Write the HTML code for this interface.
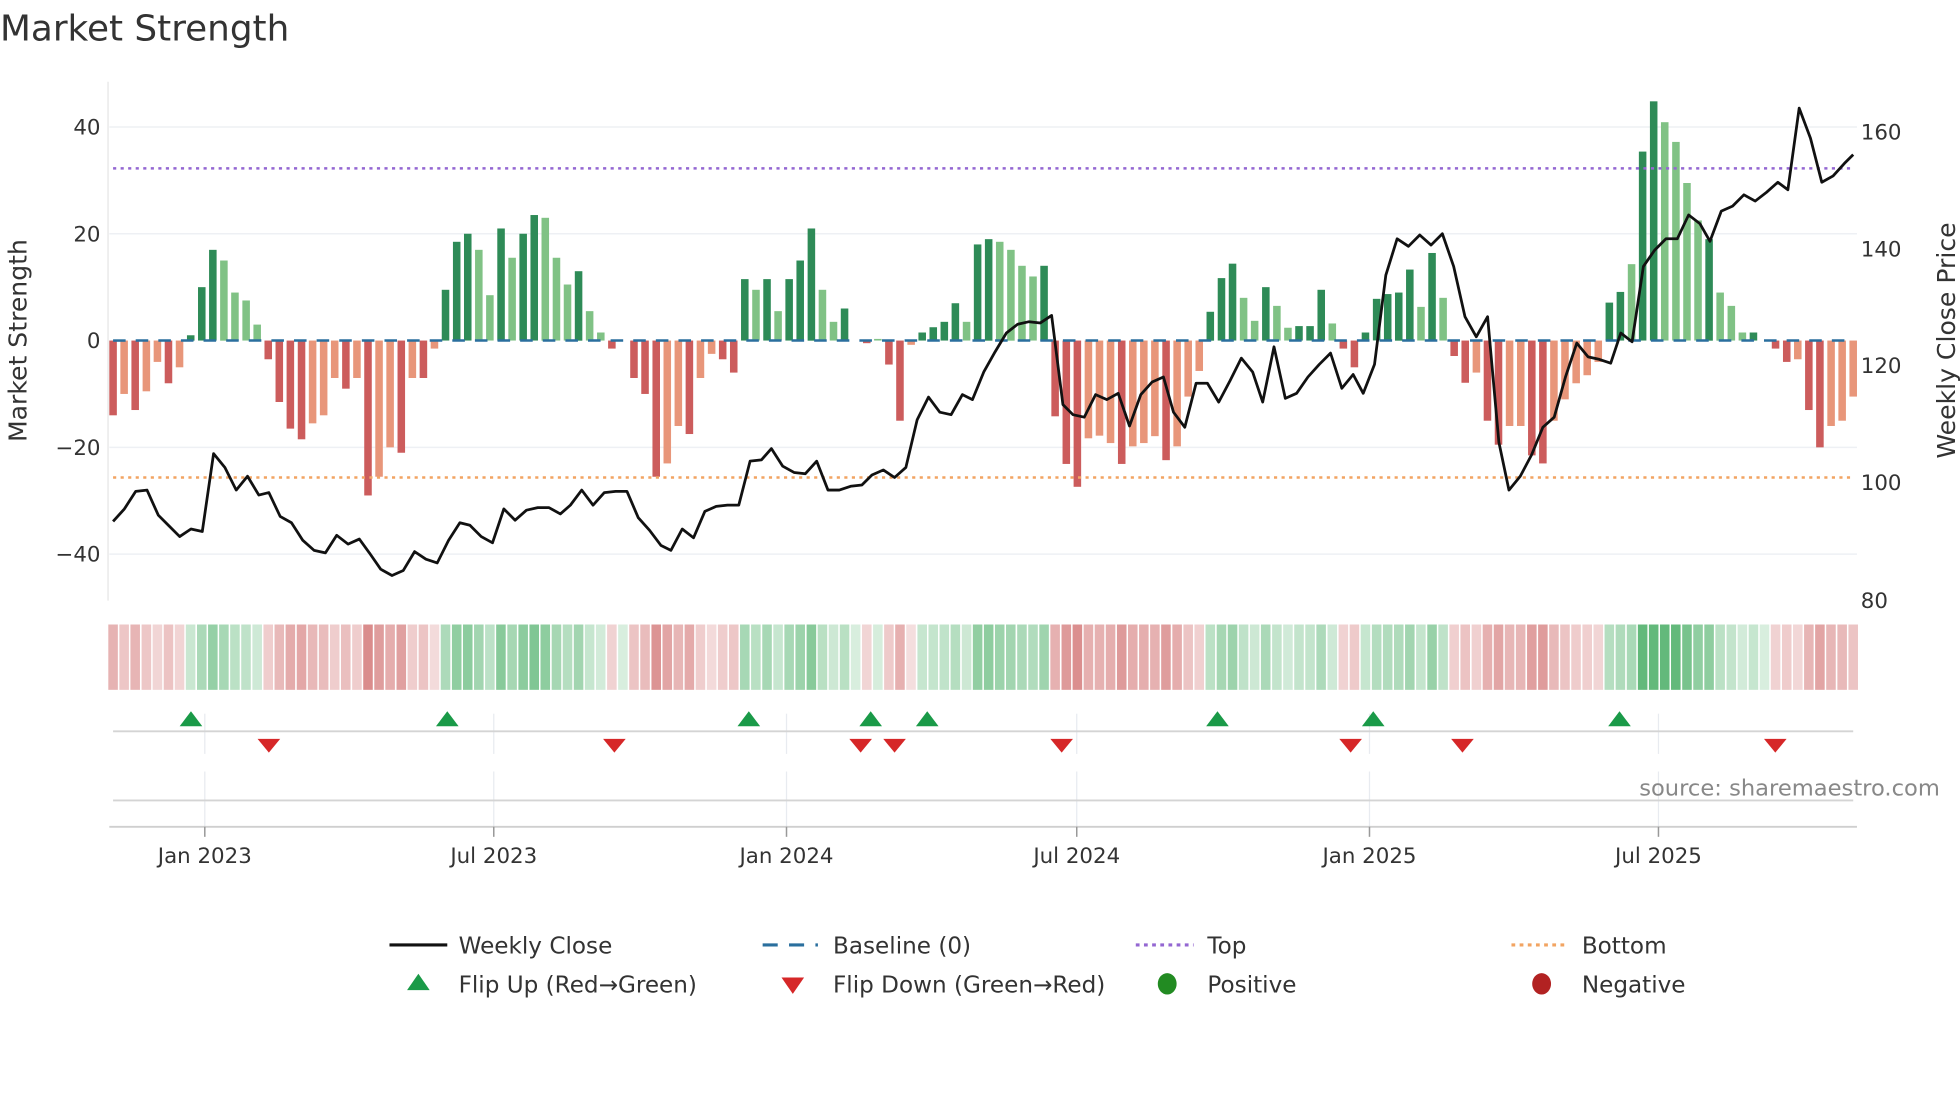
<!DOCTYPE html>
<html><head><meta charset="utf-8"><style>
html,body{margin:0;padding:0;background:#fff;width:1960px;height:1102px;overflow:hidden}
svg{display:block;font-family:"DejaVu Sans","Liberation Sans",sans-serif}
</style></head><body>
<svg id="s" width="1960" height="1102" viewBox="0 0 1560 877" xmlns="http://www.w3.org/2000/svg">
<text x="0" y="32" font-size="28.5" fill="#333">Market Strength</text>
<g stroke="#eef0f4" stroke-width="1.2">
<line x1="87" y1="101" x2="1478" y2="101"/><line x1="87" y1="186" x2="1478" y2="186"/>
<line x1="87" y1="356" x2="1478" y2="356"/><line x1="87" y1="441" x2="1478" y2="441"/>
</g>
<line x1="86" y1="65" x2="86" y2="478" stroke="#e6e6e6"/>
<g id="bars"></g>
<line x1="90" y1="271" x2="1476" y2="271" stroke="#2a6f9e" stroke-width="2" stroke-dasharray="10,8"/>
<line x1="90" y1="134" x2="1476" y2="134" stroke="#9467d2" stroke-width="2" stroke-dasharray="2.5,3.5"/>
<line x1="90" y1="380" x2="1476" y2="380" stroke="#f2a462" stroke-width="2" stroke-dasharray="2.5,3.5"/>
<polyline id="price" fill="none" stroke="#111" stroke-width="2.2" stroke-linejoin="round"/>
<g font-size="17" fill="#333" text-anchor="end">
<text x="80" y="107">40</text><text x="80" y="192">20</text><text x="80" y="277">0</text>
<text x="80" y="362">−20</text><text x="80" y="447">−40</text>
</g>
<g font-size="17" fill="#333">
<text x="1481" y="111">160</text><text x="1481" y="204">140</text><text x="1481" y="297">120</text>
<text x="1481" y="390">100</text><text x="1481" y="484">80</text>
</g>
<text transform="translate(21,271) rotate(-90)" text-anchor="middle" font-size="20" fill="#333">Market Strength</text>
<text transform="translate(1556,271) rotate(-90)" text-anchor="middle" font-size="20" fill="#333">Weekly Close Price</text>
<g id="strip"></g>
<g stroke="#e8ebf0" stroke-width="1">
<line x1="163" y1="568" x2="163" y2="600"/><line x1="163" y1="614" x2="163" y2="658"/>
<line x1="393" y1="568" x2="393" y2="600"/><line x1="393" y1="614" x2="393" y2="658"/>
<line x1="626" y1="568" x2="626" y2="600"/><line x1="626" y1="614" x2="626" y2="658"/>
<line x1="857" y1="568" x2="857" y2="600"/><line x1="857" y1="614" x2="857" y2="658"/>
<line x1="1090" y1="568" x2="1090" y2="600"/><line x1="1090" y1="614" x2="1090" y2="658"/>
<line x1="1320" y1="568" x2="1320" y2="600"/><line x1="1320" y1="614" x2="1320" y2="658"/>
</g>
<line x1="90" y1="582" x2="1475" y2="582" stroke="#d4d4d4" stroke-width="1.5"/>
<line x1="90" y1="637" x2="1475" y2="637" stroke="#d4d4d4" stroke-width="1.5"/>
<line x1="87" y1="658" x2="1478" y2="658" stroke="#cfcfcf" stroke-width="1.5"/>
<g stroke="#999" stroke-width="1.2">
<line x1="163" y1="658" x2="163" y2="666"/><line x1="393" y1="658" x2="393" y2="666"/><line x1="626" y1="658" x2="626" y2="666"/>
<line x1="857" y1="658" x2="857" y2="666"/><line x1="1090" y1="658" x2="1090" y2="666"/><line x1="1320" y1="658" x2="1320" y2="666"/>
</g>
<g id="flips"></g>
<text x="1544" y="633" text-anchor="end" font-size="18" fill="#888">source: sharemaestro.com</text>
<g font-size="17" fill="#333" text-anchor="middle">
<text x="163" y="687">Jan 2023</text><text x="393" y="687">Jul 2023</text><text x="626" y="687">Jan 2024</text>
<text x="857" y="687">Jul 2024</text><text x="1090" y="687">Jan 2025</text><text x="1320" y="687">Jul 2025</text>
</g>
<g font-size="18.4" fill="#333">
<line x1="310" y1="752" x2="356" y2="752" stroke="#111" stroke-width="2.5"/>
<text x="365" y="759">Weekly Close</text>
<line x1="607" y1="752" x2="651" y2="752" stroke="#2a6f9e" stroke-width="2.5" stroke-dasharray="12,9"/>
<text x="663" y="759">Baseline (0)</text>
<line x1="904" y1="752" x2="950" y2="752" stroke="#9467d2" stroke-width="2.5" stroke-dasharray="3,3.5"/>
<text x="961" y="759">Top</text>
<line x1="1203" y1="752" x2="1247" y2="752" stroke="#f2a462" stroke-width="2.5" stroke-dasharray="3,3.5"/>
<text x="1259" y="759">Bottom</text>
<polygon points="333,775 342,788 324,788" fill="#1a9a48"/>
<text x="365" y="790">Flip Up (Red→Green)</text>
<polygon points="622,778 640,778 631,791" fill="#d62728"/>
<text x="663" y="790">Flip Down (Green→Red)</text>
<ellipse cx="929" cy="783" rx="7.5" ry="8.5" fill="#228b22"/>
<text x="961" y="790">Positive</text>
<ellipse cx="1227" cy="783" rx="7.5" ry="8.5" fill="#b22222"/>
<text x="1259" y="790">Negative</text>
</g>
</svg>
<script>
var V=[[-14,1],[-10,0],[-13,1],[-9.5,0],[-4,0],[-8,1],[-5,0],[1,1],[10,1],[17,1],[15,0],[9,0],[7.5,0],[3,0],[-3.5,1],[-11.5,1],[-16.5,1],[-18.5,1],[-15.5,0],[-14,0],[-7,0],[-9,1],[-7,0],[-29,1],[-25.5,0],[-20,0],[-21,1],[-7,0],[-7,1],[-1.5,0],[9.5,1],[18.5,1],[20,1],[17,0],[8.5,0],[21,1],[15.5,0],[20,1],[23.5,1],[23,0],[15.5,0],[10.5,0],[13,1],[5.5,0],[1.5,0],[-1.5,1],[0,0],[-7,1],[-10,1],[-25.5,1],[-23,0],[-16,0],[-17.5,1],[-7,0],[-2.5,0],[-3.5,1],[-6,1],[11.5,1],[9.5,0],[11.5,1],[5.5,0],[11.5,1],[15,1],[21,1],[9.5,0],[3.5,0],[6,1],[0,0],[-0.5,1],[0.3,0],[-4.5,1],[-15,1],[-0.8,0],[1.5,1],[2.5,1],[3.5,1],[7,1],[3.5,0],[18,1],[19,1],[18.5,0],[17,0],[14,0],[12,0],[14,1],
[-14.2,1],[-23.1,1],[-27.4,1],[-18.3,0],[-17.8,0],[-19.2,0],[-23.1,1],[-19.8,0],[-19.2,0],[-17.9,0],[-22.4,1],[-19.8,0],[-10.5,0],[-5.7,0],
[5.4,1],[11.7,1],[14.4,1],[8,0],[3.7,0],[10,1],[6.5,0],[2.4,0],[2.7,1],[2.7,1],[9.5,1],[3.2,0],[-1.5,1],[-5,1],[1.5,1],[7.8,1],[8.7,1],[9,1],[13.3,1],[6.3,0],[16.4,1],[8,0],
[-2.9,1],[-7.9,1],[-6,0],[-15,1],[-19.5,1],[-16,0],[-16,0],[-21.5,1],[-23,1],[-15,0],[-11,0],[-8,0],[-6.5,0],[-4,0],
[7.1,1],[9.1,1],[14.3,0],[35.4,1],[44.8,1],[40.9,0],[37.2,0],[29.5,0],[22.5,0],[19,1],[9,0],[6.5,0],[1.5,0],[1.5,1],[0,0],[-1.5,1],[-4,1],[-3.5,0],[-13,1],[-20,1],[-16,0],[-15,0],[-10.5,0]];
var n=V.length,x0=90,x1=1475,st=(x1-x0)/(n-1),b='',s='';
for(var i=0;i<n;i++){var v=V[i][0],d=V[i][1],x=x0+i*st;
 if(v!=0){var c=v>0?(d?'#2e8b57':'#80c285'):(d?'#cc5c5c':'#e8967a');var h=Math.abs(v)*4.25;
 b+='<rect x="'+(x-3).toFixed(1)+'" y="'+(v>0?271-h:271).toFixed(1)+'" width="6" height="'+h.toFixed(1)+'" fill="'+c+'"/>';}
 var a=Math.min(0.8,0.2+Math.abs(v)/60+(d?0.06:0));
 var cc=v>=0?'rgba(60,168,90,'+a.toFixed(2)+')':'rgba(205,100,100,'+a.toFixed(2)+')';
 s+='<rect x="'+(x-st/2+0.6).toFixed(1)+'" y="497" width="'+(st-1.2).toFixed(1)+'" height="52" fill="'+cc+'"/>';}
document.getElementById('bars').innerHTML=b;document.getElementById('strip').innerHTML=s;
var P=[[90,415],[99,405],[108,391],[117,390],[126,410],[134,418],[143,427],[152,421],[161,423],[170,361],[179,372],[188,390],[197,379],[206,394],[214,392],[223,411],[232,416],[241,430],[250,438],[259,440],[268,426],[277,433],[286,429],[294,440],[303,453],[312,458],[321,454],[330,439],[339,445],[348,448],[357,430],[366,416],[374,418],[383,427],[392,432],[401,405],[410,414],[419,406],[428,404],[437,404],[446,409],[454,402],[463,390],[472,402],[481,392],[490,391],[499,391],[508,412],[517,422],[526,434],[534,438],[543,421],[552,428],[561,407],[570,403],[579,402],[588,402],[597,367],[606,366],[614,357],[623,371],[632,376],[641,377],[650,367],[659,390],[668,390],[677,387],[686,386],[694,378],[703,374],[712,380],[721,372],[730,334],[739,316],[748,328],[757,330],[766,314],[774,318],[783,296],[792,280],[801,265],[810,258],[819,256],[828,257],[837,251],[846,322],[854,330],[863,332],[872,314],[881,318],[890,313],[899,339],[908,314],[917,304],[926,300],[934,328],[943,340],[952,305],[961,305],[970,320],[979,303],[988,285],[997,296],[1005,320],[1014,276],[1023,317],[1032,313],[1041,300],[1050,290],[1059,281],[1068,309],[1077,298],[1085,313],[1094,290],[1103,219],[1112,190],[1121,196],[1130,187],[1139,195],[1148,186],[1157,212],[1166,252],[1175,268],[1184,252],[1193,352],[1201,390],[1210,379],[1219,362],[1228,340],[1237,332],[1246,300],[1255,273],[1264,284],[1273,286],[1282,289],[1290,265],[1299,272],[1308,212],[1317,199],[1326,190],[1335,190],[1344,171],[1353,178],[1361,192],[1370,168],[1379,164],[1388,155],[1397,160],[1406,153],[1415,145],[1423,151],[1432,86],[1441,110],[1450,145],[1459,140],[1468,130],[1475,123]];
document.getElementById('price').setAttribute('points',P.map(function(p){return p.join(',')}).join(' '));
var f='';[152,356,596,693,738,969,1093,1289].forEach(function(x){f+='<polygon points="'+x+',566 '+(x+9)+',578 '+(x-9)+',578" fill="#1a9a48"/>';});
[214,489,685,712,845,1075,1164,1413].forEach(function(x){f+='<polygon points="'+(x-9)+',588 '+(x+9)+',588 '+x+',599" fill="#d62728"/>';});
document.getElementById('flips').innerHTML=f;
</script>
</body></html>
